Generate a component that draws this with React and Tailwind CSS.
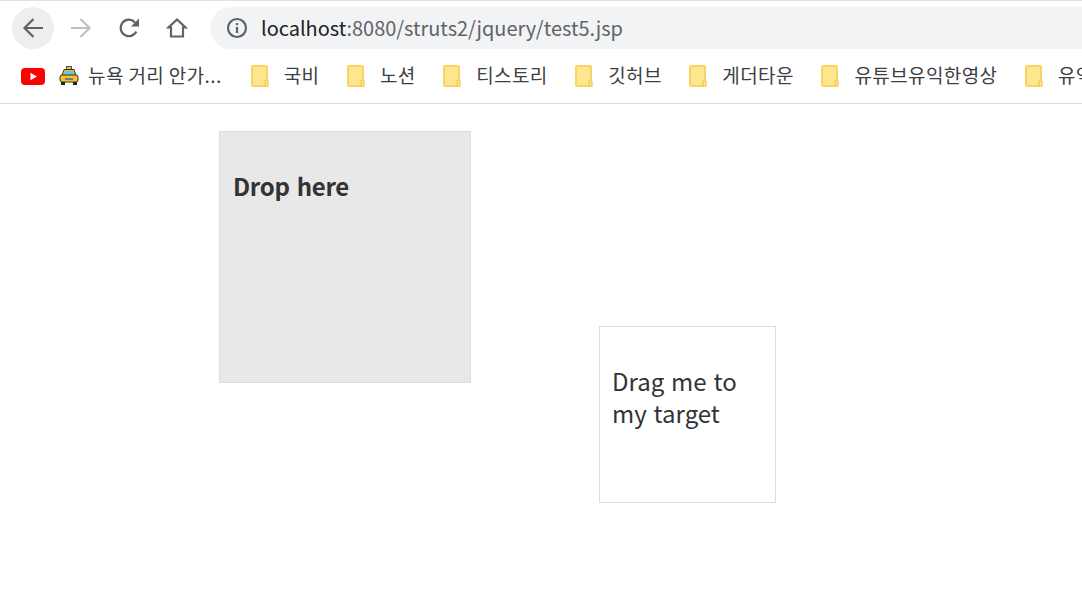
import React from 'react';

const font = { fontFamily: '"Noto Sans CJK KR", sans-serif' };

const Folder = () => (
  <svg width="18" height="22" viewBox="0 0 18 22" className="shrink-0">
    <rect x="1" y="1" width="15" height="20" rx="1" fill="#fee58f" stroke="#f8d563" strokeWidth="2" />
    <path d="M14 21v-4.5a1.5 1.5 0 0 1 3 0V21z" fill="#fee58f" stroke="#f2c94c" strokeWidth="1.2" />
  </svg>
);

const YouTube = () => (
  <svg width="24" height="17" viewBox="0 0 24 17" className="shrink-0">
    <rect width="24" height="17" rx="4" fill="#ff0000" />
    <path d="M9.5 4.8v7.4l6.4-3.7z" fill="#fff" />
  </svg>
);

const Taxi = () => (
  <svg width="20" height="20" viewBox="0 0 20 20" className="shrink-0">
    <rect x="7.5" y="0.5" width="5" height="3" fill="#f5b921" stroke="#333" strokeWidth="0.8" />
    <path d="M5 3.5h10l2 6H3z" fill="#f5b921" stroke="#333" strokeWidth="1" />
    <path d="M6 5h8l1 3.5H5z" fill="#5bc8f0" />
    <rect x="1" y="9" width="18" height="7" rx="2" fill="#fbc02d" stroke="#333" strokeWidth="1" />
    <rect x="6" y="12" width="8" height="2" fill="#777" />
    <rect x="2" y="16" width="4" height="3" fill="#222" />
    <rect x="14" y="16" width="4" height="3" fill="#222" />
  </svg>
);

const bookmarks = ['국비', '노션', '티스토리', '깃허브', '게더타운', '유튜브유익한영상', '유익한'];

function Toolbar() {
  return (
    <div className="flex items-center h-[42px] mt-[6px]">
      <div className="w-[42px] h-[42px] ml-3 rounded-full bg-[#eeeeef] flex items-center justify-center shrink-0">
        <svg width="22" height="22" viewBox="0 0 22 22" fill="none" stroke="#5f6368" strokeWidth="2.2">
          <path d="M21 11H2.5M11.5 2l-9 9 9 9" />
        </svg>
      </div>
      <div className="w-[22px] ml-[16px] flex shrink-0">
        <svg width="22" height="22" viewBox="0 0 22 22" fill="none" stroke="#bdc0c4" strokeWidth="2.2">
          <path d="M1 11h18.5M10.500 2l9 9-9 9" />
        </svg>
      </div>
      <div className="w-[22px] ml-[26px] flex shrink-0">
        <svg width="22" height="22" viewBox="0 0 22 22" fill="none">
          <path d="M18.300 14.500A8.200 8.200 0 1 1 17 5.400" stroke="#5f6368" strokeWidth="2.200" />
          <path d="M21 1.500V9.500H13z" fill="#5f6368" />
        </svg>
      </div>
      <div className="w-[22px] ml-[26px] flex shrink-0">
        <svg width="22" height="22" viewBox="0 0 22 22" fill="none" stroke="#5f6368" strokeWidth="2.200">
          <path d="M11 2.500 2.500 10.500H5V19.500H17V10.500H19.500Z" strokeLinejoin="miter" />
        </svg>
      </div>
      <div className="flex items-center flex-1 h-[42px] ml-[22px] pl-[16px] rounded-l-full bg-[#f1f3f4]">
        <svg width="22" height="22" viewBox="0 0 22 22" fill="none" stroke="#5f6368" strokeWidth="2.200" className="shrink-0">
          <circle cx="11" cy="11" r="9" />
          <path d="M11 10v6M11 6v2.200" />
        </svg>
        <span className="ml-[13px] text-[19.95px] text-[#5f6368] whitespace-nowrap" style={font}>
          <span className="text-[#202124]">localhost</span>:8080/struts2/jquery/test5.jsp
        </span>
      </div>
    </div>
  );
}

function BookmarkBar() {
  return (
    <div className="flex items-center h-[55px] pl-[21px] border-b border-[#d9d9d9] overflow-hidden whitespace-nowrap text-[19px] tracking-[0.4px] text-[#3c4043]" style={font}>
      <YouTube />
      <div className="ml-[14px]"><Taxi /></div>
      <span className="ml-[9px] mb-[2px]">뉴욕 거리 안가...</span>
      <div className="flex items-center gap-[27.5px] ml-[29px]">
        {bookmarks.map((b) => (
          <div key={b} className="flex items-center gap-[15px]">
            <Folder />
            <span className="mb-[2px]">{b}</span>
          </div>
        ))}
      </div>
    </div>
  );
}

export default function App() {
  return (
    <div className="w-[1082px] h-[603px] bg-white overflow-hidden">
      <div className="h-px bg-[#dee1e6]" />
      <Toolbar />
      <BookmarkBar />
      <div className="flex items-start pl-[219px] pt-[27px] text-[24px] text-[#333333]" style={font}>
        <div className="w-[252px] h-[252px] p-[13px] pt-[38px] bg-[#e8e8e8] border border-[#dddddd] font-bold leading-[32px] tracking-[-0.3px] [word-spacing:2px]">
          Drop here
        </div>
        <div className="w-[177px] h-[177px] ml-[128px] mt-[195px] p-[12px] pt-[38px] bg-white border border-[#dddddd] leading-[32px] [word-spacing:1.5px]">
          Drag me to my target
        </div>
      </div>
    </div>
  );
}
